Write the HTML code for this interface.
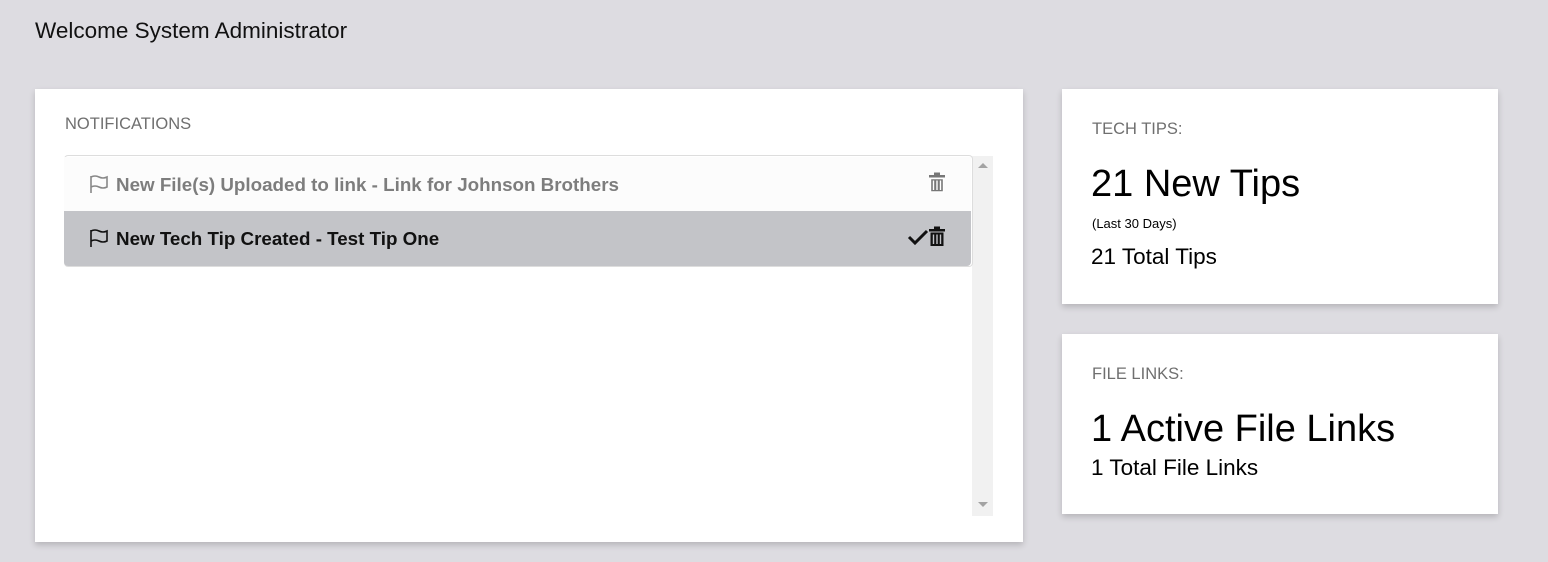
<!DOCTYPE html>
<html><head><style>
body{margin:0;width:1548px;height:562px;background:#dddce1;font-family:"Liberation Sans",Roboto,sans-serif;position:relative;overflow:hidden}
.abs{position:absolute}
.card{position:absolute;background:#fff;box-shadow:0 3px 6px rgba(0,0,0,.18)}
.lbl{font-size:16.5px;color:#6f6f6f}
.row{position:absolute;left:64px;width:907px;height:54px;font-weight:bold;font-size:18.8px;line-height:56px}
.flag{position:absolute;left:25px;top:18px}
</style></head><body>
<div class="abs" style="left:35px;top:18px;font-size:22.5px;color:#111">Welcome System Administrator</div>
<div class="card" style="left:35px;top:89px;width:988px;height:453px">
  <div class="abs lbl" style="left:30px;top:26px">NOTIFICATIONS</div>
</div>
<div class="abs" style="left:972px;top:156px;width:21px;height:360px;background:#f1f1f1"></div>
<div class="abs" style="left:978px;top:163px;width:0;height:0;border-left:5px solid transparent;border-right:5px solid transparent;border-bottom:5px solid #a3a3a3"></div>
<div class="abs" style="left:978px;top:502px;width:0;height:0;border-left:5px solid transparent;border-right:5px solid transparent;border-top:5px solid #a3a3a3"></div>
<div class="abs" style="left:64px;top:155px;width:907px;height:110px;border:1px solid #ddd;border-radius:4px;overflow:hidden">
</div>
<div class="row" style="top:157px;background:#fcfcfc;color:#7d7d7d">
  <svg class="flag" width="20" height="18" viewBox="0 0 20 18"><path d="M2 1V18M2 2Q6 0 10 2T18 2V12Q14 14 10 12T2 12" fill="none" stroke="#888" stroke-width="1.6"/></svg>
  <span style="position:absolute;left:52px">New File(s) Uploaded to link - Link for Johnson Brothers</span>
  <svg class="abs" style="left:864px;top:15px" width="18" height="21" viewBox="0 0 18 21"><rect x="1" y="3" width="16" height="2.5" fill="#777"/><rect x="6" y="0.5" width="6" height="3" fill="#777"/><path d="M2.5 6.5H15.5V20H2.5Z M5.5 8.5V18 M9 8.5V18 M12.5 8.5V18" fill="#777" stroke="#fff" stroke-width="1.4"/></svg>
</div>
<div class="row" style="top:211px;height:55px;background:#c3c4c8;color:#111;border-radius:0 0 4px 4px">
  <svg class="flag" width="20" height="18" viewBox="0 0 20 18"><path d="M2 1V18M2 2Q6 0 10 2T18 2V12Q14 14 10 12T2 12" fill="none" stroke="#111" stroke-width="1.6"/></svg>
  <span style="position:absolute;left:52px">New Tech Tip Created - Test Tip One</span>
  <svg class="abs" style="left:843px;top:18px" width="22" height="16" viewBox="0 0 22 16"><path d="M2 8L8 14L20 2" fill="none" stroke="#111" stroke-width="3"/></svg>
  <svg class="abs" style="left:864px;top:15px" width="18" height="21" viewBox="0 0 18 21"><rect x="1" y="3" width="16" height="2.5" fill="#111"/><rect x="6" y="0.5" width="6" height="3" fill="#111"/><path d="M2.5 6.5H15.5V20H2.5Z" fill="#111"/><path d="M5.5 8.5V18 M9 8.5V18 M12.5 8.5V18" stroke="#c3c4c8" stroke-width="1.4"/></svg>
</div>
<div class="card" style="left:1062px;top:89px;width:436px;height:215px">
  <div class="abs lbl" style="left:30px;top:31px">TECH TIPS:</div>
  <div class="abs" style="left:29px;top:74px;font-size:38px;color:#000">21 New Tips</div>
  <div class="abs" style="left:30px;top:127px;font-size:13px;color:#000">(Last 30 Days)</div>
  <div class="abs" style="left:29px;top:155px;font-size:22.5px;color:#000">21 Total Tips</div>
</div>
<div class="card" style="left:1062px;top:334px;width:436px;height:180px">
  <div class="abs lbl" style="left:30px;top:31px">FILE LINKS:</div>
  <div class="abs" style="left:29px;top:74px;font-size:38px;color:#000">1 Active File Links</div>
  <div class="abs" style="left:29px;top:121px;font-size:22.5px;color:#000">1 Total File Links</div>
</div>
</body></html>
